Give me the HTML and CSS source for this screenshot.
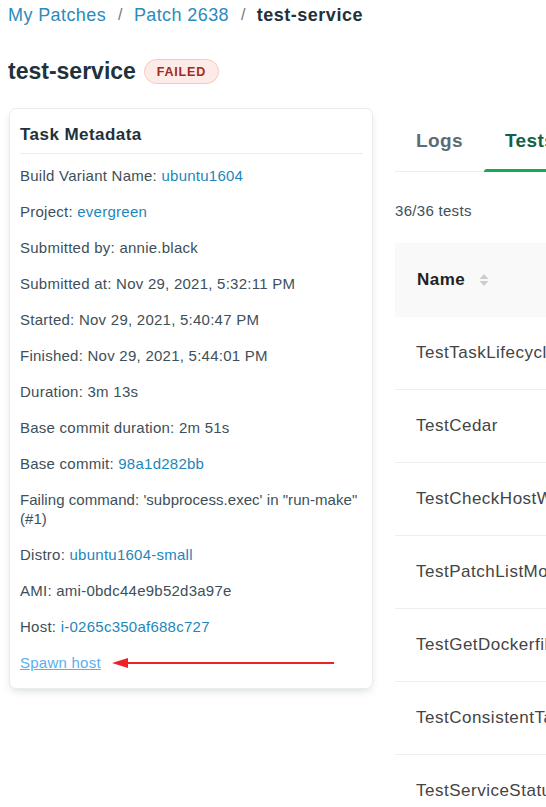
FILE: index.html
```html
<!DOCTYPE html>
<html>
<head>
<meta charset="utf-8">
<link rel="stylesheet" href="styles.css">
</head>
<body>
<div class="page">
  <nav class="crumbs">
    <a class="crumb-link">My Patches</a>
    <span class="sep">/</span>
    <a class="crumb-link">Patch 2638</a>
    <span class="sep">/</span>
    <span class="crumb-current">test-service</span>
  </nav>
  <div class="title-row">
    <h1 class="title">test-service</h1>
    <span class="badge">FAILED</span>
  </div>
  <div class="main">
    <div class="card">
      <h2 class="card-title">Task Metadata</h2>
      <ul class="meta">
        <li>Build Variant Name: <a class="lnk">ubuntu1604</a></li>
        <li>Project: <a class="lnk">evergreen</a></li>
        <li>Submitted by: annie.black</li>
        <li>Submitted at: Nov 29, 2021, 5:32:11 PM</li>
        <li>Started: Nov 29, 2021, 5:40:47 PM</li>
        <li>Finished: Nov 29, 2021, 5:44:01 PM</li>
        <li>Duration: 3m 13s</li>
        <li>Base commit duration: 2m 51s</li>
        <li>Base commit: <a class="lnk">98a1d282bb</a></li>
        <li class="tight">Failing command: 'subprocess.exec' in <span class="nowrap">"run-make"</span> (#1)</li>
        <li>Distro: <a class="lnk">ubuntu1604-small</a></li>
        <li>AMI: ami-0bdc44e9b52d3a97e</li>
        <li>Host: <a class="lnk">i-0265c350af688c727</a></li>
        <li><a class="spawn">Spawn host</a></li>
      </ul>
      <svg class="arrow" width="240" height="14" viewBox="0 0 240 14">
        <line x1="14" y1="7" x2="224" y2="7" stroke="#ee2226" stroke-width="2"/>
        <polygon points="2,7 18,2 18,12" fill="#ee2226"/>
      </svg>
    </div>
    <div class="panel">
      <div class="tabs">
        <div class="tab">Logs</div>
        <div class="tab active">Tests<span class="indicator"></span></div>
        <div class="tab">Files</div>
      </div>
      <div class="count">36/36 tests</div>
      <div class="table">
        <div class="thead">
          <span class="th">Name</span>
          <svg class="sort" width="10" height="14" viewBox="0 0 10 14">
            <polygon points="5,1 9.5,6 0.5,6" fill="#c9cfcd"/>
            <polygon points="5,13 9.5,8 0.5,8" fill="#c9cfcd"/>
          </svg>
        </div>
        <div class="tr">TestTaskLifecycleEndpoints</div>
        <div class="tr">TestCedar</div>
        <div class="tr">TestCheckHostWrapper</div>
        <div class="tr">TestPatchListModel</div>
        <div class="tr">TestGetDockerfile</div>
        <div class="tr">TestConsistentTaskID</div>
        <div class="tr">TestServiceStatus</div>
      </div>
    </div>
  </div>
</div>
</body>
</html>
```

FILE: styles.css
```css
html, body {
  margin: 0;
  padding: 0;
  background: #ffffff;
  overflow: hidden;
}
body {
  font-family: "Liberation Sans", Arial, sans-serif;
  color: #3d4f58;
}
.page {
  padding: 0 0 0 8px;
  width: 538px;
}
.crumbs {
  margin-top: 5px;
  height: 20px;
  line-height: 20px;
  font-size: 18px;
  letter-spacing: 0.4px;
  white-space: nowrap;
  display: flex;
}
.crumb-link {
  color: #2b8bbd;
}
.sep {
  color: #6b7a80;
  margin: 0 11px 0 12px;
  font-size: 16px;
}
.crumb-current {
  color: #21313c;
  font-weight: bold;
  letter-spacing: 0.5px;
}
.title-row {
  margin-top: 34px;
  height: 25px;
  display: flex;
  align-items: center;
  gap: 8px;
}
.title {
  margin: 0;
  font-size: 23px;
  line-height: 25px;
  font-weight: bold;
  color: #21313c;
}
.badge {
  box-sizing: border-box;
  height: 25px;
  width: 75px;
  border: 1px solid #f9c9bf;
  background: #fdebe7;
  color: #a1291e;
  border-radius: 13px;
  font-size: 12.5px;
  font-weight: bold;
  letter-spacing: 0.8px;
  display: flex;
  align-items: center;
  justify-content: center;
}
.main {
  margin-top: 24px;
  display: flex;
  align-items: flex-start;
}
.card {
  position: relative;
  box-sizing: border-box;
  margin-left: 1px;
  width: 364px;
  flex: none;
  border: 1px solid #e8edeb;
  border-radius: 7px;
  background: #fff;
  padding: 16px 9px 16px 10px;
  box-shadow: 0 4px 10px -3px rgba(6, 22, 33, 0.18);
}
.card-title {
  margin: 0;
  font-size: 17px;
  line-height: 20px;
  letter-spacing: 0.45px;
  font-weight: bold;
  color: #21313c;
  padding-bottom: 8px;
  border-bottom: 1px solid #e7eeec;
}
.meta {
  list-style: none;
  margin: 12px 0 0 0;
  padding: 0;
  display: flex;
  flex-direction: column;
  gap: 17px;
  font-size: 15px;
  line-height: 19px;
  letter-spacing: 0.25px;
  color: #3d4f58;
}
.meta .tight {
  letter-spacing: 0.05px;
}
.nowrap {
  white-space: nowrap;
}
.lnk {
  color: #1c87bb;
}
.spawn {
  color: #5aaef2;
  text-decoration: underline;
}
.arrow {
  position: absolute;
  left: 100px;
  top: 547px;
}
.panel {
  margin-left: 22px;
  flex: 1;
  min-width: 0;
  overflow: hidden;
}
.tabs {
  box-sizing: border-box;
  height: 64px;
  border-bottom: 1px solid #e7eeec;
  display: flex;
  width: 600px;
}
.tab {
  position: relative;
  padding: 2px 21px 0 21px;
  line-height: 61px;
  font-size: 19px;
  letter-spacing: 0.4px;
  font-weight: bold;
  color: #5d6c74;
}
.tab.active {
  color: #116149;
}
.indicator {
  position: absolute;
  left: 0;
  right: 0;
  bottom: -1px;
  height: 3px;
  background: #13aa52;
  border-radius: 3px 3px 0 0;
}
.count {
  margin-top: 29px;
  line-height: 20px;
  font-size: 15px;
  letter-spacing: 0.3px;
  color: #3d4f58;
}
.table {
  margin-top: 22px;
  width: 700px;
}
.thead {
  height: 74px;
  background: #f9f9f9;
  padding-left: 22px;
  display: flex;
  align-items: center;
  gap: 14px;
}
.th {
  font-size: 17px;
  font-weight: bold;
  letter-spacing: 0.5px;
  color: #222222;
}
.tr {
  box-sizing: border-box;
  height: 73px;
  border-bottom: 1px solid #eeeeee;
  padding-left: 21px;
  display: flex;
  align-items: center;
  font-size: 17px;
  letter-spacing: 0.5px;
  color: #444444;
  white-space: nowrap;
}
```
